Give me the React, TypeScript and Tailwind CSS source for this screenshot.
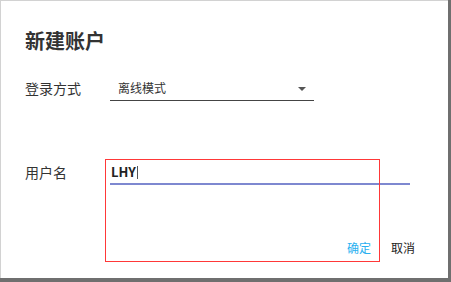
export default function App() {
  return (
    <div
      className="relative h-[282px] w-[451px] bg-[#6f6f6f] pb-[4px] pr-[3px]"
      style={{ fontFamily: '"Noto Sans CJK SC", "Noto Sans", sans-serif' }}
    >
      <div className="flex h-full flex-col border-l border-t border-[#d2d2d2] bg-white pl-[24px] pt-[30px] text-[#333]">
        {/* Title */}
        <div className="h-[20px] text-[20px] font-bold leading-[20px]">新建账户</div>

        {/* Login mode */}
        <div className="mt-[30px] flex items-start">
          <div className="w-[85px] text-[14px] leading-[14px]">登录方式</div>
          <div className="flex w-[204px] items-center justify-between border-b border-[#444] pb-[5px] pl-[8px] pr-[8px]">
            <span className="text-[12px] leading-[14px]">离线模式</span>
            <svg width="8" height="4" viewBox="0 0 8 4" className="mt-[1px]">
              <path d="M0 0h8L4 4z" fill="#555" />
            </svg>
          </div>
        </div>

        {/* Username */}
        <div className="mt-[64px] flex items-start">
          <div className="w-[85px] text-[14px] leading-[14px]">用户名</div>
          <div className="flex w-[300px] items-center border-b-2 border-[#7e88d0] pb-[4px] pl-[1px]">
            <span className="text-[13px] font-bold leading-[14px] text-[#222]">LHY</span>
            <span className="ml-[1px] h-[13px] w-px bg-[#555]" />
          </div>
        </div>

        {/* Actions */}
        <div className="mt-[56px] flex justify-end gap-[20px] pr-[33px] text-[12px] leading-[14px]">
          <button className="text-[#29b0f0]">确定</button>
          <button className="text-[#222]">取消</button>
        </div>
      </div>

      {/* Outline overlay */}
      <div className="pointer-events-none absolute left-[105px] top-[159px] h-[103px] w-[275px] border border-[#ff3838]" />
    </div>
  );
}
